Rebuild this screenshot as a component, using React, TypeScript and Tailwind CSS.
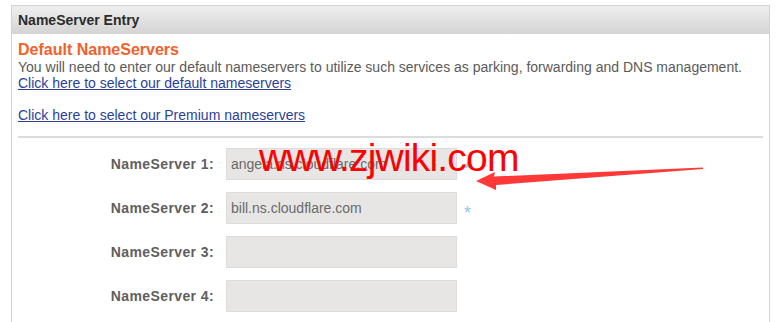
import React from "react";

const servers = [
  { label: "NameServer 1:", value: "angela.ns.cloudflare.com", required: true },
  { label: "NameServer 2:", value: "bill.ns.cloudflare.com", required: true },
  { label: "NameServer 3:", value: "", required: false },
  { label: "NameServer 4:", value: "", required: false },
];

export default function App() {
  return (
    <div className="relative h-[322px] w-[780px] overflow-hidden bg-white pt-[5px] pl-[11px] font-['Liberation_Sans',Arial,sans-serif]">
      <div className="h-[330px] w-[759px] border border-[#d3d3d3]">
        {/* Header */}
        <div className="flex h-[28px] items-center bg-gradient-to-b from-[#efefef] to-[#d4d4d4] px-[6px] text-[14px] font-bold text-[#2b2b2b]">
          NameServer Entry
        </div>

        <div className="px-[6px] pt-[6px]">
          <h2 className="text-[16px] leading-[20px] font-bold text-[#f2602b]">Default NameServers</h2>
          <p className="text-[14px] leading-[15px] text-[#5a5a5a]">
            You will need to enter our default nameservers to utilize such services as parking, forwarding and DNS management.
          </p>
          <a href="#" className="block text-[14px] leading-[16px] text-[#2a3f9a] underline">
            Click here to select our default nameservers
          </a>
          <a href="#" className="mt-[16px] block text-[14px] leading-[16px] text-[#2a3f9a] underline">
            Click here to select our Premium nameservers
          </a>
          <div className="mt-[13px] h-[2px] bg-[#dcdcdc]" />

          {/* Form rows */}
          <div className="mt-[10px] flex flex-col gap-[12px]">
            {servers.map((s) => (
              <div key={s.label} className="flex items-center">
                <label className="w-[196px] text-right text-[14px] font-bold tracking-[0.4px] text-[#5e5e5e]">
                  {s.label}
                </label>
                <input
                  readOnly
                  value={s.value}
                  className="ml-[12px] h-[32px] w-[231px] border border-[#dedcdb] bg-[#e8e6e5] px-[4px] text-[14px] text-[#6a6a6a] outline-none"
                />
                {s.required && (
                  <span className="ml-[7px] translate-y-[5px] text-[18px] leading-none text-[#8fc6ec]">*</span>
                )}
              </div>
            ))}
          </div>
        </div>
      </div>

      {/* Watermark */}
      <div className="pointer-events-none absolute left-[259px] top-[136px] text-[39px] leading-[44px] tracking-[-0.8px] text-[#ff0000]">
        www.zjwiki.com
      </div>

      {/* Arrow */}
      <svg className="pointer-events-none absolute left-0 top-0" width="780" height="322" viewBox="0 0 780 322">
        <polygon
          points="476,181 495,172 494,176.5 703,167.5 703,169 496,185 496,190"
          fill="#ff3838"
        />
      </svg>
    </div>
  );
}
